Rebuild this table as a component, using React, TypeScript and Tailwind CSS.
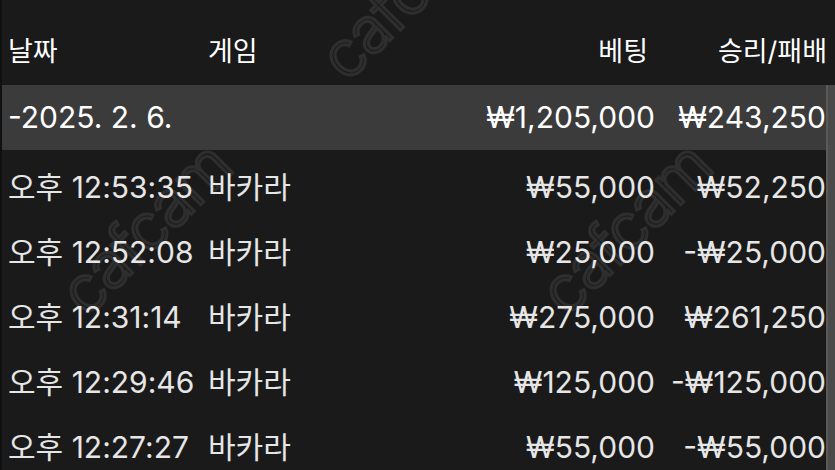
const ROWS = [
  { time: '오후 12:53:35', game: '바카라', bet: '₩55,000', result: '₩52,250' },
  { time: '오후 12:52:08', game: '바카라', bet: '₩25,000', result: '-₩25,000' },
  { time: '오후 12:31:14', game: '바카라', bet: '₩275,000', result: '₩261,250' },
  { time: '오후 12:29:46', game: '바카라', bet: '₩125,000', result: '-₩125,000' },
  { time: '오후 12:27:27', game: '바카라', bet: '₩55,000', result: '-₩55,000' },
];

const font = { fontFamily: '"Inter", "Noto Sans CJK KR", sans-serif' };
const cols = 'grid grid-cols-[200px_120px_1fr_171px] items-center pl-[8px]';

function Watermark({ className }: { className: string }) {
  return (
    <div
      className={`pointer-events-none absolute text-[64px] font-light tracking-tight text-transparent [-webkit-text-stroke:3px_rgba(255,255,255,0.09)] -rotate-45 ${className}`}
    >
      cafcam
    </div>
  );
}

export default function App() {
  return (
    <div className="relative w-[835px] h-[470px] overflow-hidden bg-[#1a1a1a] text-[#e6e6e6]" style={font}>
      <div className="absolute left-0 top-0 h-full w-[2px] bg-[#101010]" />

      <div className={`${cols} h-[85px] pt-[20px] pr-[8px] text-[27px] text-white`}>
        <span>날짜</span>
        <span>게임</span>
        <span className="text-right pr-[8px]">베팅</span>
        <span className="text-right">승리/패배</span>
      </div>

      <div className="flex">
        <div className="flex-1">
          <div className={`${cols} h-[65px] bg-[#3b3b3b] text-[30px] text-white`}>
            <span>-2025. 2. 6.</span>
            <span />
            <span className="text-right">₩1,205,000</span>
            <span className="text-right">₩243,250</span>
          </div>
          {ROWS.map((r) => (
            <div key={r.time} className={`${cols} h-[65px] pt-[10px] text-[30px]`}>
              <span>{r.time}</span>
              <span>{r.game}</span>
              <span className="text-right">{r.bet}</span>
              <span className="text-right">{r.result}</span>
            </div>
          ))}
        </div>
        <div className="w-[9px] border-l-[2px] border-[#5a5a5a] bg-[#4a4a4a] h-[385px]" />
      </div>

      <Watermark className="left-[300px] top-[-55px]" />
      <Watermark className="left-[40px] top-[180px]" />
      <Watermark className="left-[520px] top-[180px]" />
    </div>
  );
}
